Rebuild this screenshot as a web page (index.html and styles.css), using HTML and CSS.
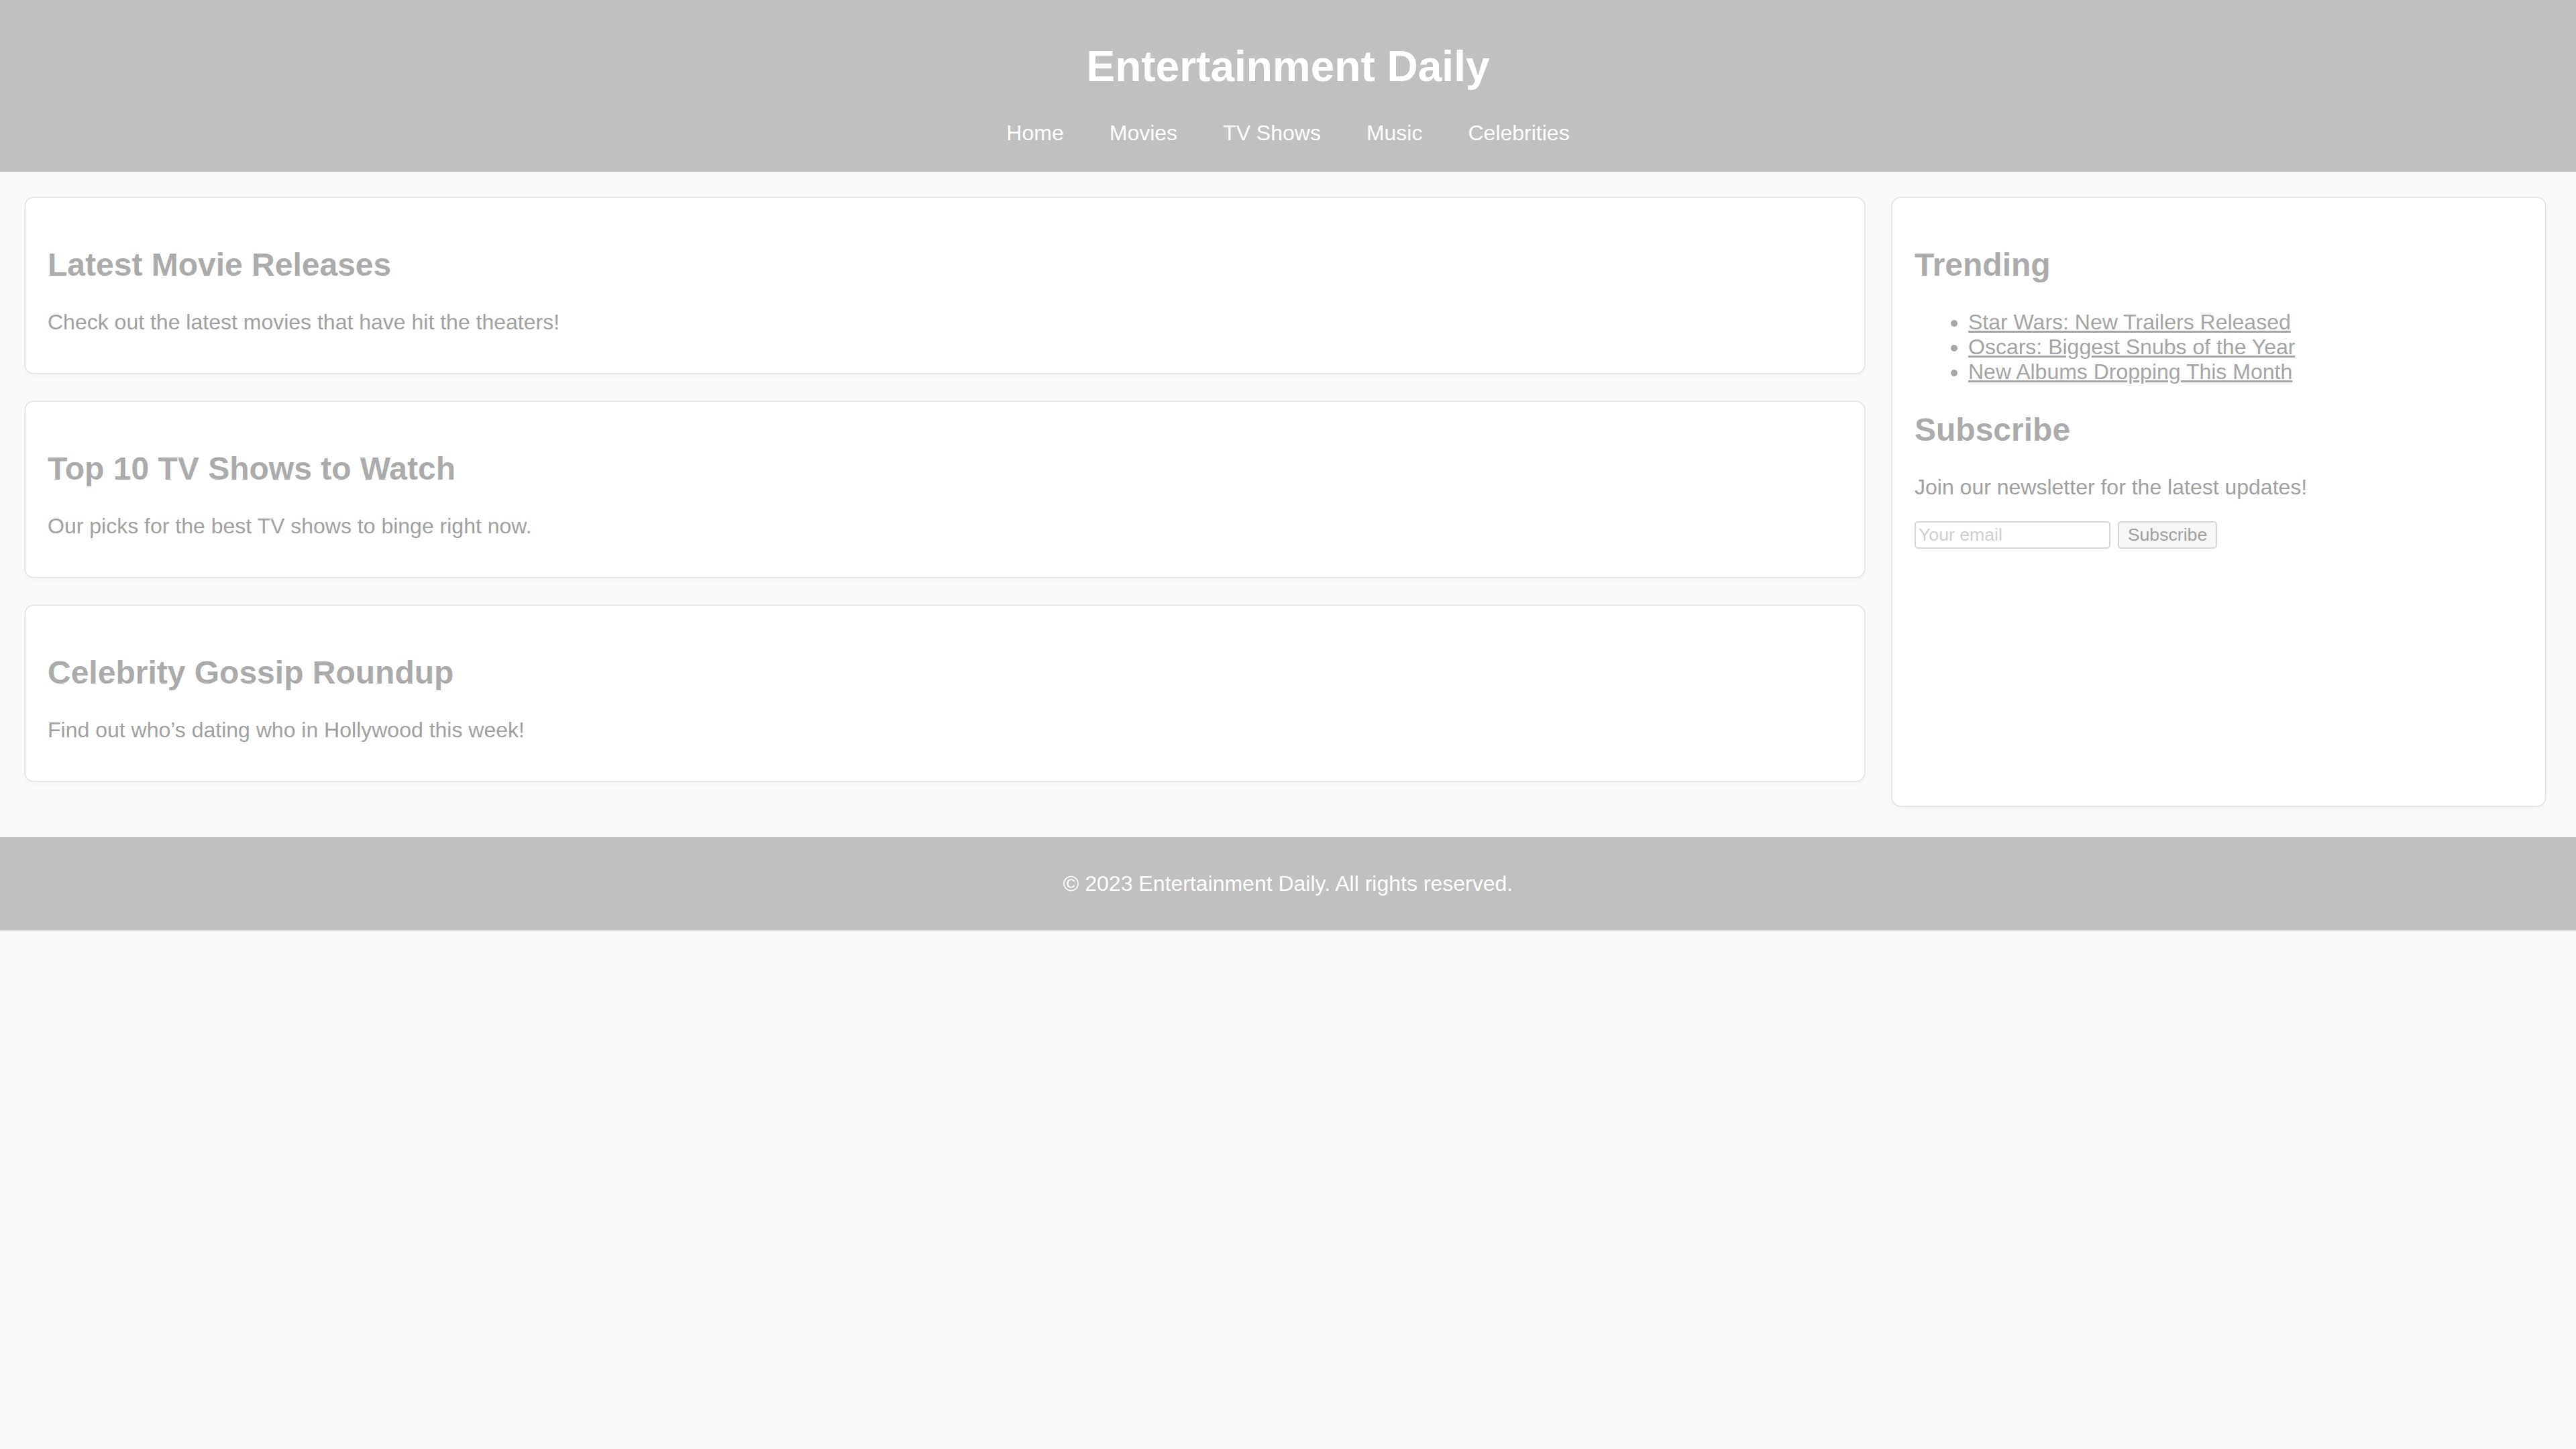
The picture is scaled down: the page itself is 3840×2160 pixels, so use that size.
FILE: index.html
```html
<!DOCTYPE html>
<html lang="en">
<head>
<meta charset="utf-8">
<title>Entertainment Daily</title>
<link rel="stylesheet" href="styles.css">
</head>
<body>
<header class="site-header">
  <h1 class="site-title">Entertainment Daily</h1>
  <nav class="site-nav">
    <a href="#">Home</a>
    <a href="#">Movies</a>
    <a href="#">TV Shows</a>
    <a href="#">Music</a>
    <a href="#">Celebrities</a>
  </nav>
</header>
<div class="layout">
  <main class="articles">
    <article class="card">
      <h2>Latest Movie Releases</h2>
      <p>Check out the latest movies that have hit the theaters!</p>
    </article>
    <article class="card">
      <h2>Top 10 TV Shows to Watch</h2>
      <p>Our picks for the best TV shows to binge right now.</p>
    </article>
    <article class="card">
      <h2>Celebrity Gossip Roundup</h2>
      <p>Find out who’s dating who in Hollywood this week!</p>
    </article>
  </main>
  <aside class="sidebar">
    <h2>Trending</h2>
    <ul class="trend-list">
      <li><a href="#">Star Wars: New Trailers Released</a></li>
      <li><a href="#">Oscars: Biggest Snubs of the Year</a></li>
      <li><a href="#">New Albums Dropping This Month</a></li>
    </ul>
    <h2>Subscribe</h2>
    <p>Join our newsletter for the latest updates!</p>
    <form class="subscribe-form">
      <input type="email" placeholder="Your email">
      <button type="button">Subscribe</button>
    </form>
  </aside>
</div>
<footer class="site-footer">
  <p>© 2023 Entertainment Daily. All rights reserved.</p>
</footer>
</body>
</html>
```
FILE: styles.css
```css
html, body {
  margin: 0;
  padding: 0;
}
body {
  background: #fafafa;
  font-family: "Liberation Sans", Arial, sans-serif;
  font-size: 32px;
  color: #a0a0a0;
}
.site-header {
  background: #c0c0c0;
  color: #ffffff;
  text-align: center;
  padding: 39px 0 39px;
}
.site-title {
  font-size: 64px;
  font-weight: bold;
  margin: 23px 0 44px;
}
.site-nav {
  display: flex;
  justify-content: center;
  gap: 68px;
}
.site-nav a {
  color: #ffffff;
  text-decoration: none;
}
.layout {
  display: flex;
  align-items: stretch;
  gap: 42px;
  padding: 39px 46px 47px 38px;
}
.articles {
  flex: 1;
  display: flex;
  flex-direction: column;
  gap: 43px;
  padding-bottom: 37px;
}
.card {
  background: #ffffff;
  border-radius: 12px;
  padding: 32px 33px 25px;
  box-shadow: 0 0 0 1.5px #e2e2e2, 0 4px 8px rgba(0, 0, 0, 0.03);
}
h2 {
  font-size: 48px;
  font-weight: bold;
  color: #ababab;
  margin: 40px 0;
}
p {
  margin: 32px 0;
}
.sidebar {
  flex: none;
  width: 973px;
  box-sizing: border-box;
  background: #ffffff;
  border-radius: 12px;
  padding: 32px 33px 25px;
  box-shadow: 0 0 0 1.5px #e2e2e2, 0 4px 8px rgba(0, 0, 0, 0.03);
}
.trend-list {
  margin: 32px 0;
  padding-left: 80px;
  color: #a8a8a8;
}
.trend-list a {
  color: #a4a4a4;
}
.subscribe-form {
  display: flex;
  align-items: center;
  gap: 11px;
}
.subscribe-form input {
  width: 292px;
  height: 41px;
  box-sizing: border-box;
  font-family: "Liberation Sans", Arial, sans-serif;
  font-size: 26.67px;
  padding: 2px 4px;
  border: 2px solid #d6d6d6;
  border-radius: 5px;
  background: #ffffff;
  color: #a0a0a0;
}
.subscribe-form input::placeholder {
  color: #cfcfcf;
}
.subscribe-form button {
  width: 148px;
  height: 41px;
  box-sizing: border-box;
  font-family: "Liberation Sans", Arial, sans-serif;
  font-size: 26.67px;
  padding: 2px 12px;
  border: 2px solid #d6d6d6;
  border-radius: 5px;
  background: #f7f7f7;
  color: #a0a0a0;
}
.site-footer {
  background: #c0c0c0;
  color: #ffffff;
  text-align: center;
  padding: 19px 0;
}
.site-footer p {
  margin: 32px 0;
}
```
